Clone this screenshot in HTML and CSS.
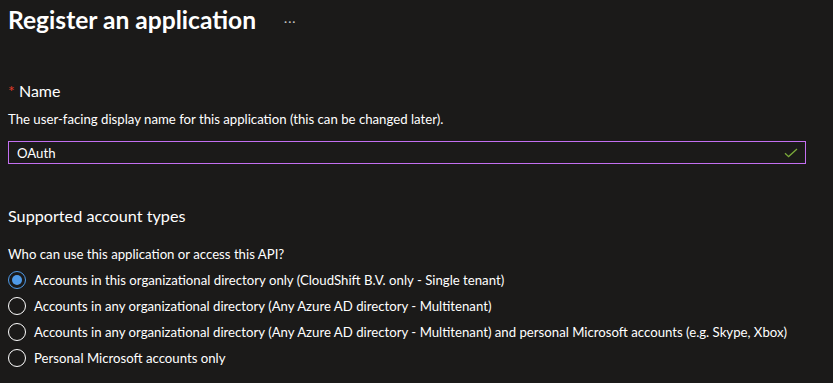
FILE: index.html
```html
<!DOCTYPE html>
<html>
<head>
<meta charset="utf-8">
<link rel="stylesheet" href="styles.css">
</head>
<body>
<div class="page">
  <header class="header">
    <h1 class="title">Register an application</h1>
    <span class="more">···</span>
  </header>

  <section class="field">
    <div class="label"><span class="req">*</span> Name</div>
    <div class="desc">The user-facing display name for this application (this can be changed later).</div>
    <div class="input">
      <span class="value">OAuth</span>
      <svg class="check" width="14" height="10" viewBox="0 0 14 10"><path d="M1 5.2 L4.6 8.6 L13 1" fill="none" stroke="#7aa83a" stroke-width="1.3"/></svg>
    </div>
  </section>

  <section class="types">
    <h2 class="subtitle">Supported account types</h2>
    <div class="question">Who can use this application or access this API?</div>
    <div class="radios">
      <label class="radio checked"><span class="dot"></span>Accounts in this organizational directory only (CloudShift B.V. only - Single tenant)</label>
      <label class="radio"><span class="dot"></span>Accounts in any organizational directory (Any Azure AD directory - Multitenant)</label>
      <label class="radio"><span class="dot"></span>Accounts in any organizational directory (Any Azure AD directory - Multitenant) and personal Microsoft accounts (e.g. Skype, Xbox)</label>
      <label class="radio"><span class="dot"></span>Personal Microsoft accounts only</label>
    </div>
  </section>
</div>
</body>
</html>
```
FILE: styles.css
```css
html, body {
  margin: 0;
  padding: 0;
  background: #1b1a19;
  color: #ffffff;
  font-family: "Segoe UI", Lato, "Open Sans", sans-serif;
}
.page {
  padding: 2px 27px 0 8px;
}
.header {
  display: flex;
  align-items: center;
  gap: 28px;
  height: 36px;
}
.title {
  margin: 0;
  font-size: 24.6px;
  font-weight: 700;
  line-height: 32px;
}
.more {
  font-size: 12px;
  color: #c8c6c4;
  letter-spacing: 1px;
  margin-top: 2px;
}
.field {
  margin-top: 42px;
}
.label {
  font-size: 16px;
  line-height: 22px;
}
.req {
  color: #e33a28;
}
.desc {
  margin-top: 8px;
  font-size: 13.2px;
  line-height: 18px;
}
.input {
  margin-top: 13px;
  height: 21px;
  border: 1px solid #c36ff1;
  display: flex;
  align-items: center;
  justify-content: space-between;
  padding: 0 7px 0 8px;
  font-size: 13.2px;
}
.check {
  display: block;
}
.types {
  margin-top: 41px;
}
.subtitle {
  margin: 0;
  font-size: 16.2px;
  font-weight: 400;
  line-height: 22px;
}
.question {
  margin-top: 18px;
  font-size: 13.2px;
  line-height: 18px;
}
.radios {
  margin-top: 7px;
  display: flex;
  flex-direction: column;
  gap: 6px;
}
.radio {
  display: flex;
  align-items: center;
  gap: 8px;
  height: 20px;
  font-size: 13.2px;
}
.dot {
  box-sizing: border-box;
  width: 18px;
  height: 18px;
  border: 1px solid #ffffff;
  border-radius: 50%;
  display: flex;
  align-items: center;
  justify-content: center;
  flex: none;
}
.radio.checked .dot {
  border-color: #4f9ae8;
}
.radio.checked .dot::after {
  content: "";
  width: 10px;
  height: 10px;
  border-radius: 50%;
  background: #4f9ae8;
}
```
